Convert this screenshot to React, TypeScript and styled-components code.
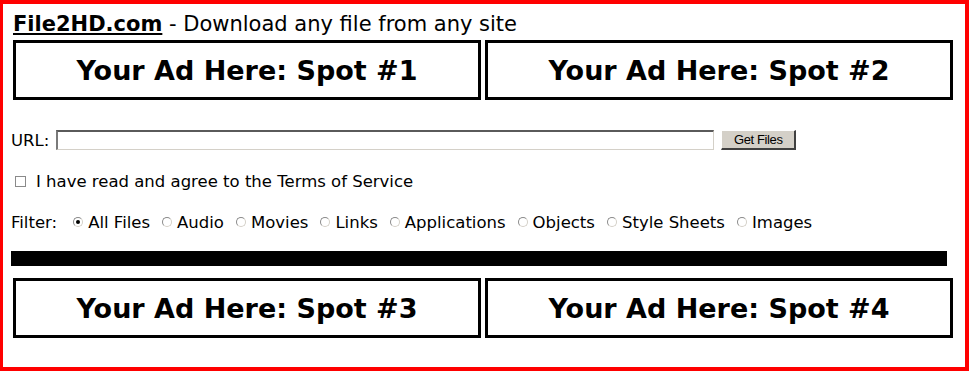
import styled, { createGlobalStyle } from "styled-components";

const GlobalStyle = createGlobalStyle`
  html, body {
    margin: 0;
    padding: 0;
    background: #ffffff;
  }
  body {
    font-family: "DejaVu Sans", Verdana, sans-serif;
    color: #000000;
  }
`;

const Frame = styled.div`
  box-sizing: border-box;
  width: 969px;
  height: 371px;
  border: 4px solid #ff0000;
  border-left-width: 3px;
  display: flex;
  flex-direction: column;
  overflow: hidden;
`;

const Title = styled.div`
  margin: 8px 0 0 10px;
  font-size: 21px;
  line-height: 24px;
  height: 24px;
  white-space: nowrap;
`;

const SiteName = styled.a`
  font-weight: bold;
  color: #000000;
  text-decoration: underline;
`;

const AdRow = styled.div<{ top: number }>`
  display: flex;
  gap: 4px;
  margin: ${(p) => p.top}px 0 0 10px;
`;

const AdBox = styled.div`
  box-sizing: border-box;
  width: 468px;
  height: 60px;
  border: 3px solid #000000;
  display: flex;
  align-items: center;
  justify-content: center;
  font-size: 27px;
  font-weight: bold;
  white-space: nowrap;
`;

const FormRow = styled.div<{ top: number }>`
  display: flex;
  align-items: center;
  margin: ${(p) => p.top}px 0 0 8px;
  font-size: 16.5px;
  white-space: nowrap;
  height: 20px;
`;

const Label = styled.span<{ gap: number }>`
  margin-right: ${(p) => p.gap}px;
`;

const UrlInput = styled.input`
  box-sizing: border-box;
  width: 658px;
  height: 20px;
  margin: 0;
  padding: 0 2px;
  border-style: solid;
  border-width: 2px 1px 1px 2px;
  border-color: #5a5a5a #d4d0c8 #d4d0c8 #7a7a7a;
  background: #ffffff;
  outline: none;
`;

const Button = styled.button`
  box-sizing: border-box;
  width: 75px;
  height: 20px;
  margin: 0 0 0 7px;
  padding: 0;
  font-family: "Liberation Sans", Arial, sans-serif;
  font-size: 13px;
  letter-spacing: -0.4px;
  color: #000000;
  background: #d4d0c8;
  border-style: solid;
  border-width: 1px 2px 2px 1px;
  border-color: #ffffff #404040 #404040 #ffffff;
`;

const CheckBox = styled.span`
  box-sizing: border-box;
  width: 11px;
  height: 11px;
  margin: 0 10px 0 4px;
  border: 1px solid #8a8a8a;
  background: #ffffff;
`;

const Radio = styled.span<{ checked?: boolean }>`
  box-sizing: border-box;
  position: relative;
  width: 10px;
  height: 10px;
  margin: 0 5px 0 12px;
  border-radius: 50%;
  border: 1px solid #8a8a8a;
  border-bottom-color: #d4d0c8;
  border-right-color: #d4d0c8;
  background: #ffffff;
  &::after {
    content: "";
    display: ${(p) => (p.checked ? "block" : "none")};
    position: absolute;
    left: 2px;
    top: 2px;
    width: 4px;
    height: 4px;
    border-radius: 50%;
    background: #000000;
  }
`;

const Bar = styled.div`
  width: 936px;
  height: 15px;
  margin: 19px 0 0 8px;
  background: #000000;
`;

const filters = [
  "All Files",
  "Audio",
  "Movies",
  "Links",
  "Applications",
  "Objects",
  "Style Sheets",
  "Images",
];

export default function App() {
  return (
    <>
      <GlobalStyle />
      <Frame>
        <Title>
          <SiteName>File2HD.com</SiteName> - Download any file from any site
        </Title>
        <AdRow top={4}>
          <AdBox>Your Ad Here: Spot #1</AdBox>
          <AdBox>Your Ad Here: Spot #2</AdBox>
        </AdRow>
        <FormRow top={30}>
          <Label gap={7}>URL:</Label>
          <UrlInput type="text" />
          <Button>Get Files</Button>
        </FormRow>
        <FormRow top={21}>
          <CheckBox />
          <span>I have read and agree to the Terms of Service</span>
        </FormRow>
        <FormRow top={21}>
          <Label gap={4}>Filter:</Label>
          {filters.map((f, i) => (
            <span key={f} style={{ display: "contents" }}>
              <Radio checked={i === 0} />
              <span>{f}</span>
            </span>
          ))}
        </FormRow>
        <Bar />
        <AdRow top={12}>
          <AdBox>Your Ad Here: Spot #3</AdBox>
          <AdBox>Your Ad Here: Spot #4</AdBox>
        </AdRow>
      </Frame>
    </>
  );
}
